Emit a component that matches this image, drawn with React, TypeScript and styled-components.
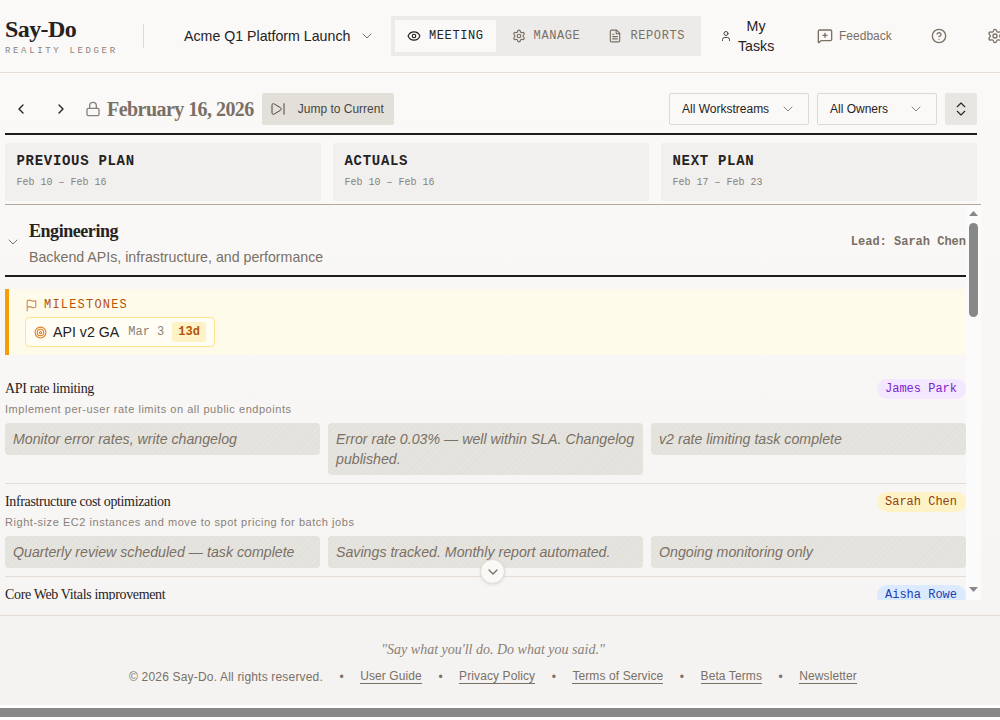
import React from "react";
import styled, { createGlobalStyle } from "styled-components";
import {
  Eye, Settings, FileText, User, MessageSquarePlus, CircleHelp, ChevronLeft, ChevronRight,
  ChevronDown, ChevronsUpDown, Lock, SkipForward, Flag, Target,
} from "lucide-react";

const Global = createGlobalStyle`
  html, body, #root { height: 100%; }
  html { overflow: hidden; }
  body { margin: 0; background: #fff; color: #1f1c1a; font-family: "Liberation Sans", Arial, sans-serif; }
  * { box-sizing: border-box; }
`;

const serif = `"Liberation Serif", "Times New Roman", serif`;
const mono = `"Liberation Mono", "Courier New", monospace`;

const Page = styled.div`
  height: 100%;
  display: flex;
  flex-direction: column;
  background: linear-gradient(#faf9f7 15%, #f6f5f3 85%);
`;

const Header = styled.header`
  flex: none;
  height: 73px;
  padding: 16px 0 0 5px;
  display: flex;
  align-items: flex-start;
  border-bottom: 1px solid #e5ddd3;
  white-space: nowrap;
  > * { flex: none; }
`;
const Brand = styled.div`
  width: 112px;
  display: flex;
  flex-direction: column;
`;
const BrandName = styled.div`
  font: bold 24px/26px ${serif};
  letter-spacing: -0.6px;
  color: #26221f;
`;
const BrandTag = styled.div`
  font: 9px/12px ${mono};
  letter-spacing: 2.65px;
  color: #8a8178;
  margin-top: 3px;
`;
const Divider = styled.div`
  width: 1px;
  height: 24px;
  margin: 8px 40px 0 26px;
  background: #e0dad2;
`;
const ProjectSelect = styled.button`
  display: flex;
  align-items: center;
  height: 40px;
  gap: 9px;
  padding: 0;
  border: 0;
  background: none;
  color: #26221f;
  font: 14.2px "Liberation Sans", sans-serif;
  width: 207px;
  svg { color: #7a7065; }
`;
const Tabs = styled.nav`
  display: flex;
  padding: 4px;
  gap: 4px;
  background: #ecebe9;
`;
const Tab = styled.div<{ $active?: boolean }>`
  display: flex;
  align-items: center;
  gap: 8px;
  height: 32px;
  padding: 0 12px;
  font: 12px ${mono};
  letter-spacing: 0.6px;
  background: ${(p) => (p.$active ? "#faf9f7" : "transparent")};
  color: ${(p) => (p.$active ? "#26221f" : "#7a7065")};
`;
const MyTasks = styled.div`
  display: flex;
  align-items: center;
  gap: 6px;
  height: 40px;
  margin-left: 19px;
  font-size: 14.2px;
  line-height: 20px;
  color: #26221f;
  svg { color: #4a4440; }
`;
const MyTasksLabel = styled.span`
  white-space: normal;
  width: 36px;
  text-align: center;
`;
const Feedback = styled.div`
  display: flex;
  align-items: center;
  gap: 6px;
  height: 40px;
  margin-left: 43px;
  font-size: 12px;
  color: #7a7065;
`;
const HeadIcon = styled.div<{ $ml: number }>`
  display: flex;
  align-items: center;
  height: 40px;
  margin-left: ${(p) => p.$ml}px;
  color: #7a7065;
`;

const Toolbar = styled.div`
  flex: none;
  margin: 20px 23px 0 5px;
  padding-bottom: 8px;
  display: flex;
  align-items: center;
  border-bottom: 2px solid #1f1c1a;
  box-sizing: content-box;
  height: 32px;
`;
const NavArrow = styled.button`
  width: 32px;
  height: 32px;
  margin-right: 8px;
  display: flex;
  align-items: center;
  justify-content: center;
  padding: 0;
  border: 0;
  background: none;
  color: #26221f;
`;
const LockIcon = styled(Lock)`
  color: #8a8178;
  margin-right: 6px;
`;
const DateTitle = styled.div`
  font: bold 20px ${serif};
  letter-spacing: -0.55px;
  color: #7a7065;
  margin-right: 8px;
`;
const JumpButton = styled.button`
  height: 32px;
  display: flex;
  align-items: center;
  justify-content: flex-start;
  gap: 12px;
  padding: 0 8px;
  width: 132px;
  border: 0;
  border-radius: 2px;
  background: #e3e0da;
  color: #4a4440;
  font: 12px "Liberation Sans", sans-serif;
  white-space: nowrap;
`;
const Spacer = styled.div`
  flex: 1;
`;
const Filter = styled.div<{ $w: number }>`
  width: ${(p) => p.$w}px;
  height: 32px;
  margin-right: 8px;
  display: flex;
  align-items: center;
  justify-content: space-between;
  padding: 0 12px;
  border: 1px solid #e0d8ce;
  border-radius: 2px;
  background: #faf9f7;
  font-size: 12px;
  color: #26221f;
  svg { color: #8a8178; }
`;
const ExpandButton = styled.button`
  width: 32px;
  height: 32px;
  display: flex;
  align-items: center;
  justify-content: center;
  padding: 0;
  border: 0;
  border-radius: 2px;
  background: #e8e6e2;
  color: #26221f;
`;

const ColumnHeads = styled.div`
  flex: none;
  margin: 8px 23px 0 5px;
  display: grid;
  grid-template-columns: repeat(3, 1fr);
  gap: 12px;
`;
const ColumnHead = styled.div`
  height: 58px;
  padding: 10px 11.5px;
  border-radius: 2px;
  background: #f1f0ee;
`;
const ColumnTitle = styled.div`
  font: bold 14px/16px ${mono};
  letter-spacing: 0.7px;
  color: #26221f;
`;
const ColumnDates = styled.div`
  font: 10px/12px ${mono};
  color: #8a8178;
  margin-top: 8px;
`;
const Rule = styled.div`
  flex: none;
  height: 1px;
  margin: 3px 19px 0 5px;
  background: #b5a99c;
`;

const ScrollArea = styled.div`
  position: relative;
  flex: none;
  height: 395px;
  margin: 0 19px 0 5px;
  display: flex;
`;
const Scroller = styled.div`
  flex: 1;
  min-width: 0;
  height: 100%;
  overflow: hidden;
`;
const ScrollTrack = styled.div`
  flex: none;
  width: 15px;
  display: flex;
  flex-direction: column;
  align-items: center;
  padding: 6px 0 8px;
  background: #fbfbfb;
`;
const TrackArrow = styled.svg<{ $end?: boolean }>`
  flex: none;
  width: 9px;
  height: 5px;
  margin-top: ${(p) => (p.$end ? "auto" : "0")};
  fill: #888;
`;
const ScrollThumb = styled.div`
  flex: none;
  width: 9px;
  height: 94px;
  margin-top: 7px;
  border-radius: 4.5px;
  background: #888;
`;
const SectionHead = styled.div`
  height: 72px;
  padding-top: 4px;
  display: flex;
  align-items: center;
  border-bottom: 2px solid #1f1c1a;
  svg { color: #7a7065; }
`;
const SectionChevron = styled(ChevronDown)`
  margin: 0 8px 0 0;
  flex: none;
`;
const SectionText = styled.div`
  flex: 1;
  padding-top: 2px;
`;
const SectionName = styled.div`
  font: bold 18px/24px ${serif};
  letter-spacing: -0.45px;
  color: #26221f;
`;
const SectionDesc = styled.div`
  font-size: 14.2px;
  line-height: 20px;
  margin-top: 4px;
  color: #7a7065;
`;
const Lead = styled.div`
  font: bold 12px ${mono};
  color: #7a7065;
`;
const Milestones = styled.div`
  margin-top: 12px;
  height: 66px;
  padding: 8px 16px;
  border-left: 4px solid #f59e0b;
  background: #fefbeb;
`;
const MilestoneLabel = styled.div`
  display: flex;
  align-items: center;
  gap: 6px;
  font: 12px/16px ${mono};
  letter-spacing: 1.2px;
  color: #b45309;
  svg { color: #d08a55; }
`;
const MilestoneChip = styled.div`
  display: inline-flex;
  align-items: center;
  height: 30px;
  margin-top: 4px;
  padding: 0 8px;
  border: 1px solid #fde68a;
  border-radius: 4px;
  background: #fffdf4;
  font-size: 14.2px;
  color: #26221f;
  svg { color: #dd7f1f; margin-right: 6px; }
`;
const ChipDate = styled.span`
  font: 12px ${mono};
  color: #8a8178;
  margin: 0 8px 0 9px;
`;
const ChipBadge = styled.span`
  height: 20px;
  padding: 0 6px;
  display: flex;
  align-items: center;
  border-radius: 3px;
  background: #fef3c7;
  font: bold 12px ${mono};
  color: #b45309;
`;
const RowList = styled.div`
  padding-top: 16px;
`;
const Row = styled.div`
  padding: 8px 0;
  border-bottom: 1px solid #e5ddd3;
`;
const RowTop = styled.div`
  display: flex;
  justify-content: space-between;
  align-items: flex-start;
  height: 20px;
`;
const RowTitle = styled.div`
  font: 14px/20px ${serif};
  letter-spacing: -0.35px;
  color: #26221f;
`;
const Owner = styled.span<{ $bg: string; $fg: string }>`
  height: 20px;
  padding: 0 9px 0 8px;
  border-radius: 10px;
  font: 12px/20px ${mono};
  background: ${(p) => p.$bg};
  color: ${(p) => p.$fg};
`;
const RowDesc = styled.div`
  font-size: 11px;
  line-height: 16px;
  margin-top: 2px;
  letter-spacing: 0.54px;
  color: #8a8178;
`;
const Cells = styled.div`
  display: grid;
  grid-template-columns: repeat(3, 1fr);
  gap: 8px;
  margin-top: 6px;
  align-items: start;
`;
const Cell = styled.div`
  padding: 6px 8px;
  border-radius: 4px;
  font-size: 14.2px;
  line-height: 20px;
  font-style: italic;
  color: #7a7065;
  background: repeating-linear-gradient(135deg, #e6e4df 0 2px, #e3e1dc 2px 4px);
`;
const ScrollHint = styled.button`
  position: absolute;
  left: 475px;
  top: 354px;
  width: 25px;
  height: 25px;
  display: flex;
  align-items: center;
  justify-content: center;
  padding: 0;
  border-radius: 50%;
  border: 1px solid #e0d8ce;
  background: #faf9f7;
  box-shadow: 0 1px 3px rgba(0, 0, 0, 0.1);
  color: #7a7065;
`;

const Footer = styled.footer`
  flex: none;
  height: 90px;
  margin-top: 15px;
  padding: 24px 14px 0 0;
  border-top: 1px solid #e5ddd3;
  background: #f4f3f1;
  text-align: center;
`;
const Quote = styled.div`
  font: italic 14px/20px ${serif};
  color: #8a8178;
`;
const Links = styled.div`
  display: flex;
  justify-content: center;
  align-items: center;
  gap: 16.5px;
  margin-top: 9px;
  font-size: 12px;
  line-height: 16px;
  color: #7a7065;
`;
const Copy = styled.span`
  letter-spacing: 0.18px;
`;
const FootLink = styled.a`
  border-bottom: 1px solid #7a7065;
  line-height: 13px;
  letter-spacing: 0.1px;
`;
const PageScrollbar = styled.div`
  flex: none;
  height: 15px;
  padding: 3px 0;
  background: #fff;
`;
const PageScrollThumb = styled.div`
  height: 9px;
  background: #888;
`;

type RowData = { title: string; desc: string; owner: string; cells: [string, string, string] };
const owners: Record<string, { bg: string; fg: string }> = {
  "James Park": { bg: "#f3e8ff", fg: "#7e22ce" },
  "Sarah Chen": { bg: "#fef3c7", fg: "#92400e" },
  "Aisha Rowe": { bg: "#dbeafe", fg: "#1e40af" },
};
const rows: RowData[] = [
  { title: "API rate limiting", desc: "Implement per-user rate limits on all public endpoints", owner: "James Park", cells: ["Monitor error rates, write changelog", "Error rate 0.03% — well within SLA. Changelog published.", "v2 rate limiting task complete"] },
  { title: "Infrastructure cost optimization", desc: "Right-size EC2 instances and move to spot pricing for batch jobs", owner: "Sarah Chen", cells: ["Quarterly review scheduled — task complete", "Savings tracked. Monthly report automated.", "Ongoing monitoring only"] },
];
const lastRow = { title: "Core Web Vitals improvement", owner: "Aisha Rowe" };

const footerLinks = ["User Guide", "Privacy Policy", "Terms of Service", "Beta Terms", "Newsletter"];

export default function App() {
  return (
    <Page>
      <Global />
      <Header>
        <Brand>
          <BrandName>Say-Do</BrandName>
          <BrandTag>REALITY LEDGER</BrandTag>
        </Brand>
        <Divider />
        <ProjectSelect>
          Acme Q1 Platform Launch <ChevronDown size={16} strokeWidth={1.5} />
        </ProjectSelect>
        <Tabs>
          <Tab $active><Eye size={14} />MEETING</Tab>
          <Tab><Settings size={14} />MANAGE</Tab>
          <Tab><FileText size={14} />REPORTS</Tab>
        </Tabs>
        <MyTasks>
          <User size={12} />
          <MyTasksLabel>My Tasks</MyTasksLabel>
        </MyTasks>
        <Feedback><MessageSquarePlus size={16} />Feedback</Feedback>
        <HeadIcon $ml={39}><CircleHelp size={16} /></HeadIcon>
        <HeadIcon $ml={40}><Settings size={16} /></HeadIcon>
      </Header>

      <Toolbar>
        <NavArrow><ChevronLeft size={16} /></NavArrow>
        <NavArrow><ChevronRight size={16} /></NavArrow>
        <LockIcon size={16} />
        <DateTitle>February 16, 2026</DateTitle>
        <JumpButton><SkipForward size={16} strokeWidth={1.5} />Jump to Current</JumpButton>
        <Spacer />
        <Filter $w={140}>All Workstreams <ChevronDown size={16} strokeWidth={1.5} /></Filter>
        <Filter $w={120}>All Owners <ChevronDown size={16} strokeWidth={1.5} /></Filter>
        <ExpandButton><ChevronsUpDown size={18} strokeWidth={1.5} /></ExpandButton>
      </Toolbar>

      <ColumnHeads>
        <ColumnHead><ColumnTitle>PREVIOUS PLAN</ColumnTitle><ColumnDates>Feb 10 – Feb 16</ColumnDates></ColumnHead>
        <ColumnHead><ColumnTitle>ACTUALS</ColumnTitle><ColumnDates>Feb 10 – Feb 16</ColumnDates></ColumnHead>
        <ColumnHead><ColumnTitle>NEXT PLAN</ColumnTitle><ColumnDates>Feb 17 – Feb 23</ColumnDates></ColumnHead>
      </ColumnHeads>
      <Rule />

      <ScrollArea>
        <Scroller>
          <SectionHead>
            <SectionChevron size={16} strokeWidth={1.5} />
            <SectionText>
              <SectionName>Engineering</SectionName>
              <SectionDesc>Backend APIs, infrastructure, and performance</SectionDesc>
            </SectionText>
            <Lead>Lead: Sarah Chen</Lead>
          </SectionHead>
          <Milestones>
            <MilestoneLabel><Flag size={13} />MILESTONES</MilestoneLabel>
            <MilestoneChip>
              <Target size={13} />API v2 GA<ChipDate>Mar 3</ChipDate><ChipBadge>13d</ChipBadge>
            </MilestoneChip>
          </Milestones>
          <RowList>
            {rows.map((r) => (
              <Row key={r.title}>
                <RowTop>
                  <RowTitle>{r.title}</RowTitle>
                  <Owner $bg={owners[r.owner].bg} $fg={owners[r.owner].fg}>{r.owner}</Owner>
                </RowTop>
                <RowDesc>{r.desc}</RowDesc>
                <Cells>
                  {r.cells.map((c) => <Cell key={c}>{c}</Cell>)}
                </Cells>
              </Row>
            ))}
            <Row>
              <RowTop>
                <RowTitle>{lastRow.title}</RowTitle>
                <Owner $bg={owners[lastRow.owner].bg} $fg={owners[lastRow.owner].fg}>{lastRow.owner}</Owner>
              </RowTop>
            </Row>
          </RowList>
        </Scroller>
        <ScrollTrack>
          <TrackArrow viewBox="0 0 9 5"><polygon points="4.5,0 9,5 0,5" /></TrackArrow>
          <ScrollThumb />
          <TrackArrow $end viewBox="0 0 9 5"><polygon points="0,0 9,0 4.5,5" /></TrackArrow>
        </ScrollTrack>
        <ScrollHint><ChevronDown size={16} /></ScrollHint>
      </ScrollArea>

      <Footer>
        <Quote>"Say what you'll do. Do what you said."</Quote>
        <Links>
          <Copy>© 2026 Say-Do. All rights reserved.</Copy>
          {footerLinks.map((l) => (
            <React.Fragment key={l}>
              <span>•</span>
              <FootLink>{l}</FootLink>
            </React.Fragment>
          ))}
        </Links>
      </Footer>
      <PageScrollbar><PageScrollThumb /></PageScrollbar>
    </Page>
  );
}
